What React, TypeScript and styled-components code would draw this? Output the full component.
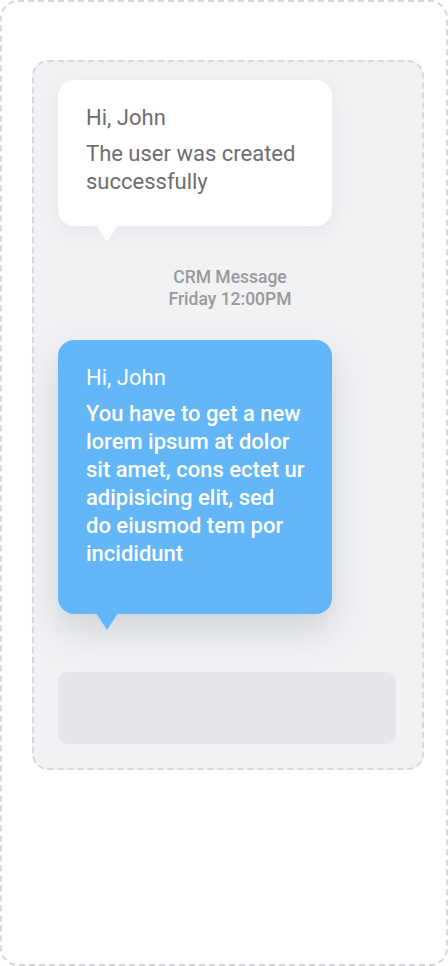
import React from "react";
import styled, { createGlobalStyle } from "styled-components";

const GlobalStyle = createGlobalStyle`
	html, body {
		margin: 0;
		padding: 0;
		background: #fff;
	}
	body {
		font-family: Roboto, "Noto Sans", sans-serif;
	}
`;

const Frame = styled.div`
	box-sizing: border-box;
	width: 448px;
	height: 966px;
	border: 2px dashed #d5d9dd;
	border-radius: 18px;
	padding: 58px 22px 0 30px;
`;

const Panel = styled.div`
	box-sizing: border-box;
	height: 710px;
	border: 2px dashed #d5d9dd;
	border-radius: 16px;
	background: #f1f2f4;
	padding: 18px 26px 0 24px;
	display: flex;
	flex-direction: column;
`;

const Bubble = styled.div<{ $variant: "light" | "blue" }>`
	position: relative;
	box-sizing: border-box;
	width: 274px;
	border-radius: 16px;
	padding: ${(p) => (p.$variant === "blue" ? "24px 16px 46px 28px" : "24px 16px 30px 28px")};
	background: ${(p) => (p.$variant === "blue" ? "#63b6f7" : "#ffffff")};
	color: ${(p) => (p.$variant === "blue" ? "#ffffff" : "#6e6e6e")};
	box-shadow: ${(p) =>
		p.$variant === "blue"
			? "0 16px 36px rgba(120, 130, 140, 0.28)"
			: "0 6px 18px rgba(150, 155, 165, 0.12)"};

	&::after {
		content: "";
		position: absolute;
		left: 38px;
		bottom: -16px;
		border-left: 11px solid transparent;
		border-right: 11px solid transparent;
		border-top: 17px solid ${(p) => (p.$variant === "blue" ? "#63b6f7" : "#ffffff")};
	}
`;

const Greeting = styled.p`
	margin: 0 0 8px;
	font-size: 22px;
	line-height: 28px;
`;

const Body = styled.p<{ $weight?: number }>`
	margin: 0;
	font-size: 22px;
	line-height: 28px;
	font-weight: ${(p) => p.$weight ?? 400};
`;

const Caption = styled.div`
	margin: 40px 0 0;
	width: 344px;
	text-align: center;
	color: #9a9a9a;
	font-size: 17.5px;
	line-height: 22px;
	font-weight: 500;
`;

const Spacer = styled.div<{ $h: number }>`
	height: ${(p) => p.$h}px;
	flex-shrink: 0;
`;

const InputBar = styled.div`
	width: 338px;
	height: 72px;
	border-radius: 9px;
	background: #e7e6ea;
`;

export default function App() {
	return (
		<>
			<GlobalStyle />
			<Frame>
				<Panel>
					<Bubble $variant="light">
						<Greeting>Hi, John</Greeting>
						<Body>
							The user was created
							<br />
							successfully
						</Body>
					</Bubble>
					<Caption>
						CRM Message
						<br />
						Friday 12:00PM
					</Caption>
					<Spacer $h={30} />
					<Bubble $variant="blue">
						<Greeting>Hi, John</Greeting>
						<Body $weight={500}>
							You have to get a new
							<br />
							lorem ipsum at dolor
							<br />
							sit amet, cons ectet ur
							<br />
							adipisicing elit, sed
							<br />
							do eiusmod tem por
							<br />
							incididunt
						</Body>
					</Bubble>
					<Spacer $h={58} />
					<InputBar />
				</Panel>
			</Frame>
		</>
	);
}
